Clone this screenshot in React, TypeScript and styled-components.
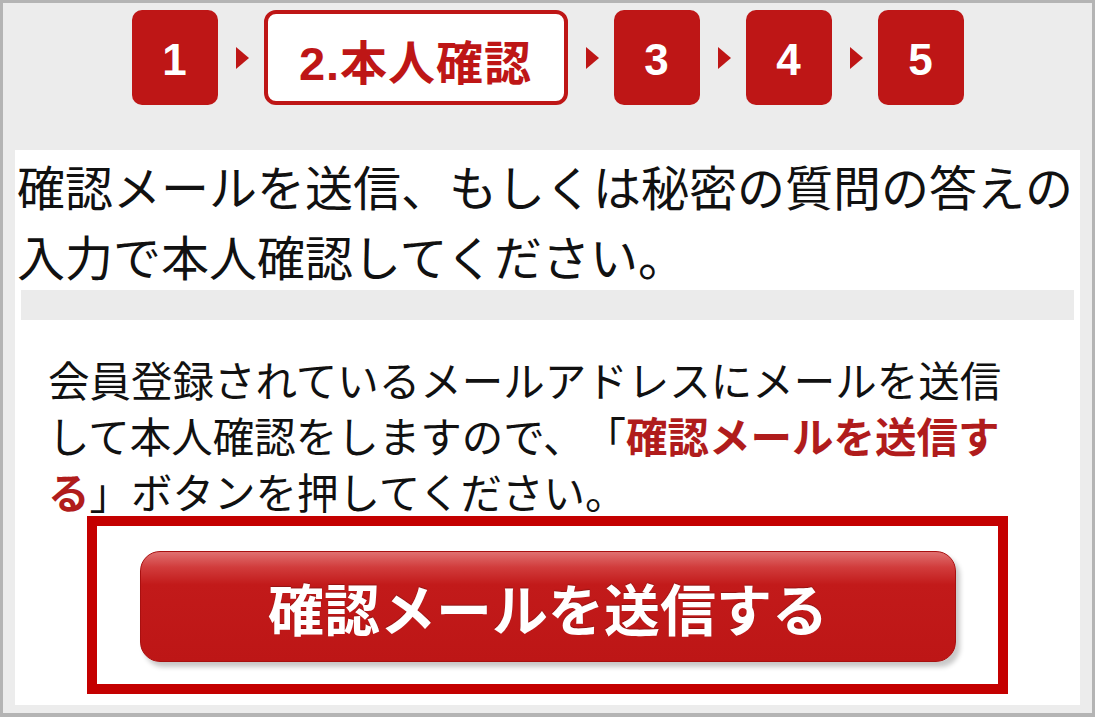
import React from 'react'
import styled, { createGlobalStyle } from 'styled-components'

const GlobalStyle = createGlobalStyle`
  html, body {
    margin: 0;
    padding: 0;
    background: #ececec;
  }
  * {
    box-sizing: border-box;
  }
`

const RED = '#be1616'

const Page = styled.div`
  height: 717px;
  border: 3px solid #b4b4b4;
  border-bottom-width: 4px;
  background: #ececec;
  padding: 7px 12px 8px;
  display: flex;
  flex-direction: column;
  font-family: 'Noto Sans CJK JP', sans-serif;
  text-spacing-trim: space-all;
`

const Steps = styled.ol`
  list-style: none;
  margin: 0;
  padding: 0;
  display: flex;
  justify-content: center;
  align-items: center;
`

const Step = styled.li<{ $active?: boolean }>`
  height: 95px;
  width: ${(p) => (p.$active ? '304px' : '86px')};
  border-radius: ${(p) => (p.$active ? '12px' : '10px')};
  background: ${(p) => (p.$active ? '#fff' : RED)};
  border: ${(p) => (p.$active ? `4px solid ${RED}` : 'none')};
  color: ${(p) => (p.$active ? RED : '#fff')};
  display: flex;
  align-items: center;
  justify-content: center;
  padding-top: 4px;
  font-family: 'Liberation Sans', 'Noto Sans CJK JP', sans-serif;
  font-weight: 700;
  font-size: ${(p) => (p.$active ? '47px' : '44px')};
  letter-spacing: ${(p) => (p.$active ? '1px' : '0')};
`

const Arrow = styled.li`
  width: 46px;
  display: flex;
  justify-content: center;

  &::before {
    content: '';
    width: 0;
    height: 0;
    border-top: 11px solid transparent;
    border-bottom: 11px solid transparent;
    border-left: 13px solid ${RED};
    margin-left: 4px;
  }
`

const Panel = styled.section`
  flex: 1;
  margin-top: 45px;
  background: #fff;
  display: flex;
  flex-direction: column;
`

const Lead = styled.p`
  margin: 0;
  padding: 0 0 0 2px;
  font-size: 48px;
  line-height: 70px;
  color: #111;
`

const Divider = styled.div`
  height: 30px;
  margin: 0 6px;
  background: #ebebeb;
`

const Note = styled.p`
  margin: 0 0 -3px;
  padding: 31px 62px 0 33px;
  font-size: 41.5px;
  line-height: 56px;
  color: #111;
  text-spacing-trim: space-all;
`

const Em = styled.strong`
  color: #b01c1c;
  font-weight: 700;
`

const ButtonFrame = styled.div`
  width: 921px;
  margin: 0 auto;
  border: 10px solid #c40000;
  padding: 25px 42px 22px 43px;
`

const SendButton = styled.button`
  display: block;
  width: 100%;
  height: 111px;
  border: 1px solid #a81010;
  border-radius: 20px;
  background: linear-gradient(
    to bottom,
    #e07070 0%,
    #d13c3c 14%,
    #c21a1a 30%,
    #bd1616 100%
  );
  box-shadow: 4px 5px 5px rgba(0, 0, 0, 0.22);
  color: #fff;
  font-family: 'Noto Sans CJK JP', sans-serif;
  font-weight: 700;
  font-size: 56px;
  text-shadow: 0 -1px 1px rgba(0, 0, 0, 0.25);
  cursor: pointer;
`

const steps = ['1', '2.本人確認', '3', '4', '5']

const App = () => {
  return (
    <>
      <GlobalStyle />
      <Page>
        <Steps>
          {steps.map((label, i) => (
            <React.Fragment key={label}>
              {i > 0 && <Arrow />}
              <Step $active={i === 1}>{label}</Step>
            </React.Fragment>
          ))}
        </Steps>

        <Panel>
          <Lead>
            確認メールを送信、もしくは秘密の質問の答えの入力で本人確認してください。
          </Lead>
          <Divider />
          <Note>
            会員登録されているメールアドレスにメールを送信して本人確認をしますので、「
            <Em>確認メールを送信する</Em>」ボタンを押してください。
          </Note>
          <ButtonFrame>
            <SendButton type="button">確認メールを送信する</SendButton>
          </ButtonFrame>
        </Panel>
      </Page>
    </>
  )
}

export default App
